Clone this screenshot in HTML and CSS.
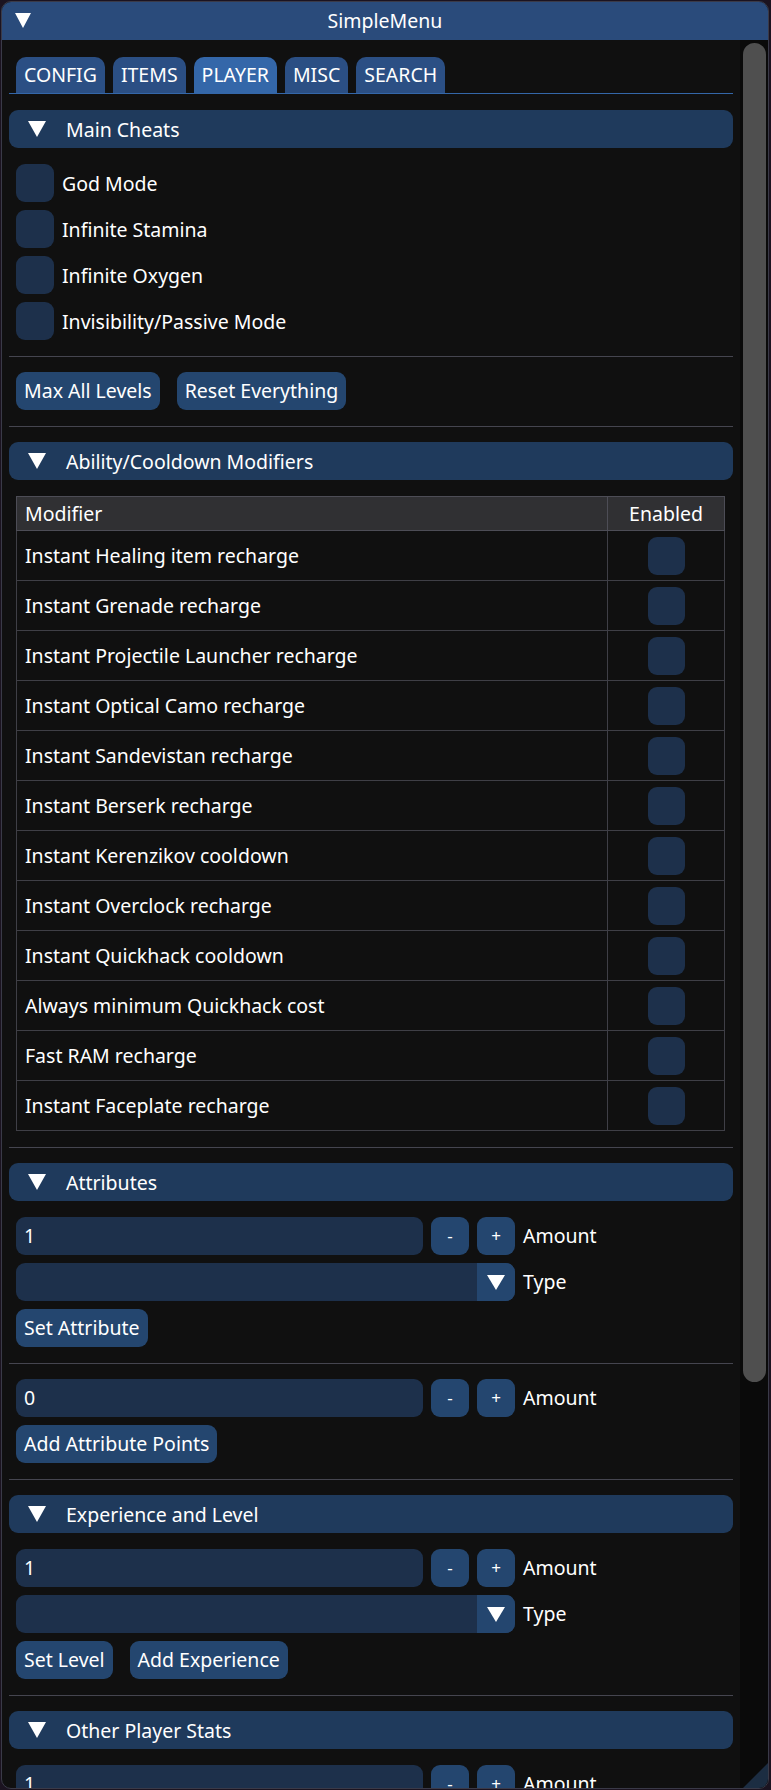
FILE: index.html
```html
<!DOCTYPE html>
<html>
<head>
<meta charset="utf-8">
<link rel="stylesheet" href="styles.css">
</head>
<body>
<div class="window">
  <div class="titlebar">
    <span class="tri tri-title"></span>
    <span class="title">SimpleMenu</span>
  </div>
  <div class="body">
    <div class="content">
      <div class="tabbar">
        <div class="tab">CONFIG</div>
        <div class="tab">ITEMS</div>
        <div class="tab active">PLAYER</div>
        <div class="tab">MISC</div>
        <div class="tab">SEARCH</div>
      </div>

      <div class="header"><span class="tri tri-head"></span><span>Main Cheats</span></div>
      <div class="row check-row"><span class="checkbox"></span><span>God Mode</span></div>
      <div class="row check-row"><span class="checkbox"></span><span>Infinite Stamina</span></div>
      <div class="row check-row"><span class="checkbox"></span><span>Infinite Oxygen</span></div>
      <div class="row check-row"><span class="checkbox"></span><span>Invisibility/Passive Mode</span></div>
      <div class="sep"></div>
      <div class="row btn-row"><div class="btn">Max All Levels</div><div class="btn">Reset Everything</div></div>
      <div class="sep"></div>

      <div class="header"><span class="tri tri-head"></span><span>Ability/Cooldown Modifiers</span></div>
      <table class="mods">
        <thead>
          <tr><th class="c-name">Modifier</th><th class="c-en">Enabled</th></tr>
        </thead>
        <tbody>
          <tr><td>Instant Healing item recharge</td><td class="c-en"><span class="checkbox"></span></td></tr>
          <tr><td>Instant Grenade recharge</td><td class="c-en"><span class="checkbox"></span></td></tr>
          <tr><td>Instant Projectile Launcher recharge</td><td class="c-en"><span class="checkbox"></span></td></tr>
          <tr><td>Instant Optical Camo recharge</td><td class="c-en"><span class="checkbox"></span></td></tr>
          <tr><td>Instant Sandevistan recharge</td><td class="c-en"><span class="checkbox"></span></td></tr>
          <tr><td>Instant Berserk recharge</td><td class="c-en"><span class="checkbox"></span></td></tr>
          <tr><td>Instant Kerenzikov cooldown</td><td class="c-en"><span class="checkbox"></span></td></tr>
          <tr><td>Instant Overclock recharge</td><td class="c-en"><span class="checkbox"></span></td></tr>
          <tr><td>Instant Quickhack cooldown</td><td class="c-en"><span class="checkbox"></span></td></tr>
          <tr><td>Always minimum Quickhack cost</td><td class="c-en"><span class="checkbox"></span></td></tr>
          <tr><td>Fast RAM recharge</td><td class="c-en"><span class="checkbox"></span></td></tr>
          <tr><td>Instant Faceplate recharge</td><td class="c-en"><span class="checkbox"></span></td></tr>
        </tbody>
      </table>
      <div class="sep"></div>

      <div class="header"><span class="tri tri-head"></span><span>Attributes</span></div>
      <div class="row input-row"><div class="input">1</div><div class="btn sq">-</div><div class="btn sq">+</div><span class="lbl">Amount</span></div>
      <div class="row input-row"><div class="combo"><div class="combo-arrow"><span class="tri tri-combo"></span></div></div><span class="lbl">Type</span></div>
      <div class="row btn-row"><div class="btn">Set Attribute</div></div>
      <div class="sep"></div>
      <div class="row input-row"><div class="input">0</div><div class="btn sq">-</div><div class="btn sq">+</div><span class="lbl">Amount</span></div>
      <div class="row btn-row"><div class="btn">Add Attribute Points</div></div>
      <div class="sep"></div>

      <div class="header"><span class="tri tri-head"></span><span>Experience and Level</span></div>
      <div class="row input-row"><div class="input">1</div><div class="btn sq">-</div><div class="btn sq">+</div><span class="lbl">Amount</span></div>
      <div class="row input-row"><div class="combo"><div class="combo-arrow"><span class="tri tri-combo"></span></div></div><span class="lbl">Type</span></div>
      <div class="row btn-row"><div class="btn">Set Level</div><div class="btn">Add Experience</div></div>
      <div class="sep"></div>

      <div class="header"><span class="tri tri-head"></span><span>Other Player Stats</span></div>
      <div class="row input-row"><div class="input">1</div><div class="btn sq">-</div><div class="btn sq">+</div><span class="lbl">Amount</span></div>
    </div>
    <div class="scrolltrack"><div class="thumb"></div></div>
  </div>
  <div class="grip"></div>
</div>
</body>
</html>
```
FILE: styles.css
```css
* { box-sizing: border-box; }

html, body {
  margin: 0;
  padding: 0;
  width: 771px;
  height: 1790px;
  overflow: hidden;
  background: #1b1320;
}

body {
  font-family: "Noto Sans", "Open Sans", sans-serif;
  font-size: 19.5px;
  color: #ffffff;
}

.window {
  position: relative;
  margin: 1px 0 0 1px;
  width: 768px;
  height: 1788px;
  border: 1px solid #3a3a48;
  border-radius: 10px;
  background: #101010;
  overflow: hidden;
  display: flex;
  flex-direction: column;
}

.titlebar {
  height: 38px;
  flex: none;
  background: #2a4b7b;
  display: flex;
  align-items: center;
  justify-content: center;
  position: relative;
}

.title {
  line-height: 38px;
}

.tri {
  display: inline-block;
  width: 0;
  height: 0;
  border-style: solid;
  border-color: #ffffff transparent transparent transparent;
}

.tri-title {
  position: absolute;
  left: 13px;
  top: 11px;
  border-width: 15px 8.5px 0 8.5px;
}

.tri-head {
  border-width: 16px 9px 0 9px;
  margin: 0 20px 0 19px;
}

.tri-combo {
  border-width: 15px 9px 0 9px;
}

.body {
  flex: 1;
  display: flex;
  min-height: 0;
}

.content {
  width: 738px;
  padding: 17px 7px 0 7px;
  display: flex;
  flex-direction: column;
  gap: 8px;
  overflow: hidden;
}

.scrolltrack {
  width: 28px;
  flex: none;
  background: #0a0a0a;
  padding: 3px 2px 0 3px;
}

.thumb {
  width: 23px;
  height: 1339px;
  border-radius: 12px;
  background: #4f4f4f;
}

/* tabs */
.tabbar {
  display: flex;
  gap: 8px;
  padding-left: 7px;
  border-bottom: 1px solid #3467a9;
  height: 37px;
  flex: none;
  margin-bottom: 8px;
}

.tab {
  height: 36px;
  line-height: 36px;
  padding: 0 8px;
  background: #2b4f84;
  border-radius: 10px 10px 0 0;
}

.tab.active {
  background: #3467a9;
}

/* collapsing header */
.header {
  height: 38px;
  flex: none;
  background: #1f3a5c;
  border-radius: 9px;
  display: flex;
  align-items: center;
  margin-bottom: 8px;
}

.row {
  padding-left: 7px;
  flex: none;
  display: flex;
  align-items: center;
  height: 38px;
}

.check-row {
  gap: 8px;
}

.checkbox {
  display: inline-block;
  width: 38px;
  height: 38px;
  border-radius: 9px;
  background: #1d304b;
}

.sep {
  height: 1px;
  flex: none;
  background: #45454f;
  margin: 8px 0 7px 0;
}

.btn-row {
  gap: 17px;
}

.btn {
  height: 38px;
  line-height: 38px;
  padding: 0 8px;
  border-radius: 9px;
  background: #24466f;
  white-space: nowrap;
}

.btn.sq {
  width: 38px;
  padding: 0;
  text-align: center;
  font-size: 17px;
}

.input-row {
  gap: 8px;
}

.input {
  width: 407px;
  height: 38px;
  line-height: 38px;
  padding-left: 8px;
  border-radius: 9px;
  background: #1d304b;
}

.combo {
  width: 499px;
  height: 38px;
  border-radius: 9px;
  background: #1d304b;
  display: flex;
  justify-content: flex-end;
  overflow: hidden;
}

.combo-arrow {
  width: 38px;
  height: 38px;
  background: #24466f;
  display: flex;
  align-items: center;
  justify-content: center;
}

.lbl {
  line-height: 38px;
}

/* table */
.mods {
  margin-left: 7px;
  width: 709px;
  flex: none;
  border-collapse: collapse;
  border: 1px solid #4d4d56;
  font-size: 19.5px;
  color: #ffffff;
}

.mods th {
  height: 34px;
  background: #303033;
  font-weight: normal;
  text-align: left;
  padding: 0 8px;
  border: 1px solid #4d4d56;
}

.mods th.c-en {
  text-align: center;
  width: 117px;
}

.mods td {
  height: 50px;
  padding: 0 8px;
  border: 1px solid #3f3f46;
  vertical-align: middle;
}

.mods td.c-en {
  text-align: center;
  padding: 0;
}

.mods td.c-en .checkbox {
  display: block;
  margin: 0 auto;
  width: 37px;
}

/* resize grip */
.grip {
  position: absolute;
  right: 0;
  bottom: 0;
  width: 25px;
  height: 25px;
  background: #1c2d42;
  clip-path: polygon(100% 0, 100% 100%, 0 100%);
}
```
